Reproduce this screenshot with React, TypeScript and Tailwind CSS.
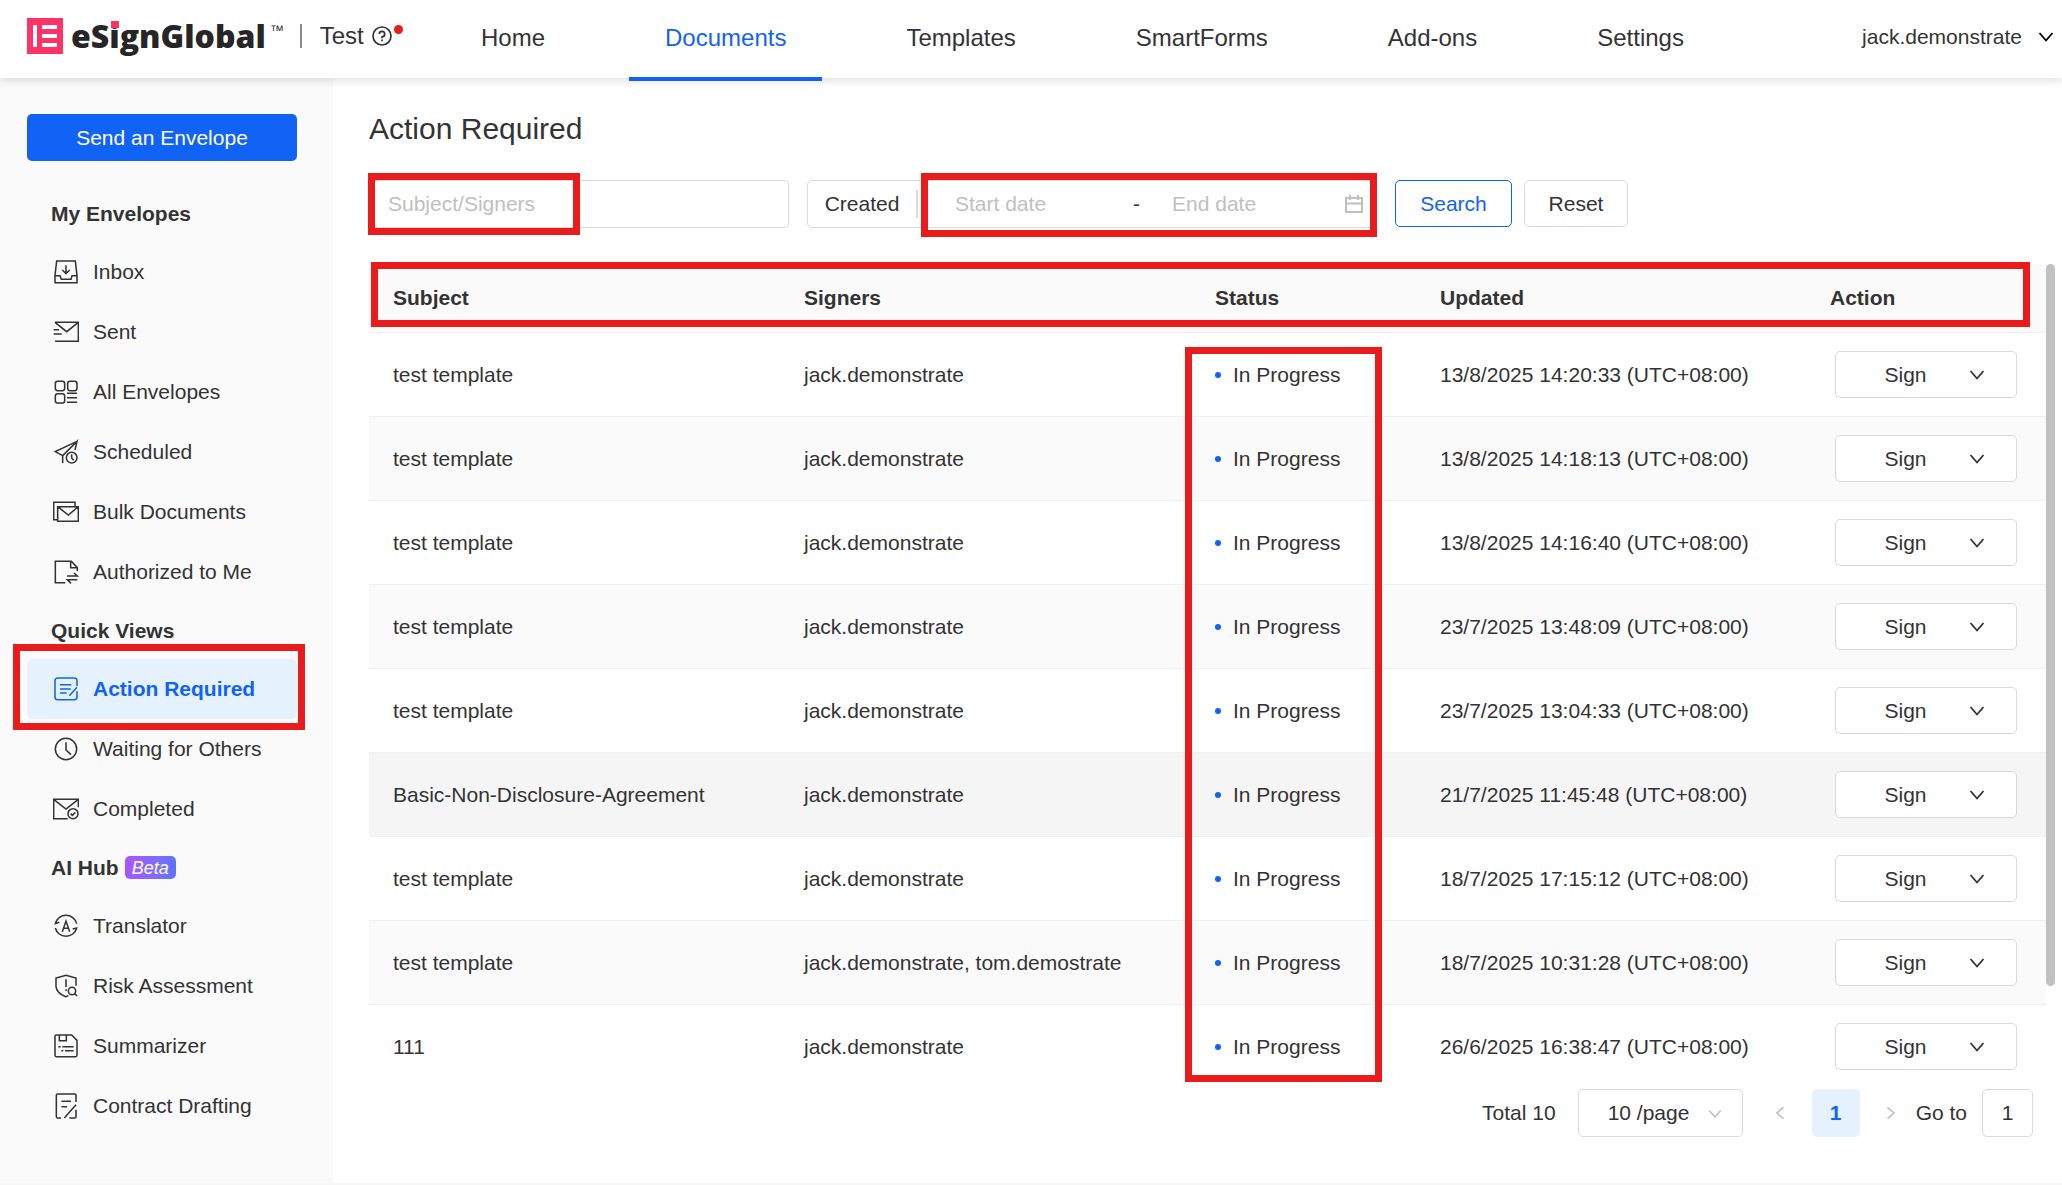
import type { ReactNode } from "react";

type NavItem = { label: string; icon: ReactNode; active?: boolean };
type Row = { subject: string; signers: string; updated: string; hovered?: boolean };

const tabs = ["Home", "Documents", "Templates", "SmartForms", "Add-ons", "Settings"];

const icons = {
  inbox: (
    <>
      <path d="M11 6H67L72 50V71H6V50Z" />
      <path d="M6 50H21L25 61H54L57 50H72M39 19V44M28 33L39 44L50 33" />
    </>
  ),
  sent: <path d="M6 10H76V67H6M6 10L41 38L76 10M2 32H18M2 45H26" />,
  all: (
    <>
      <rect x="7" y="7" width="28" height="28" rx="7" />
      <rect x="44" y="7" width="28" height="28" rx="7" />
      <rect x="7" y="44" width="28" height="28" rx="7" />
      <path d="M42 43H72M42 56H72M42 70H72" />
    </>
  ),
  scheduled: (
    <>
      <path d="M72 7L7 38L29 50V72M29 50L72 7L66 33" />
      <circle cx="56" cy="56" r="16" />
      <path d="M56 46V57L62 64" />
    </>
  ),
  bulk: <path d="M13 62H2V10H66V21M14 23H76V67H14ZM14 23L46 48L76 23" />,
  authorized: <path d="M37 71H7V7H55L73 26V36M53 7V26H73M63 42L73 51H42M73 62H43L54 73" />,
  action: (
    <path d="M72 30V14A8 8 0 0 0 64 6H14A8 8 0 0 0 6 14V63A8 8 0 0 0 14 71H64A8 8 0 0 0 72 63V46M21 26H55M21 39H53M21 51H41M72 34L49 59" />
  ),
  waiting: (
    <>
      <circle cx="39" cy="39" r="32" />
      <path d="M39 19V42L54 56" />
    </>
  ),
  completed: (
    <>
      <path d="M44 68H2V10H76V34M2 10L39 39L76 10" />
      <circle cx="60" cy="53" r="15" />
      <path d="M53 53L58 58L67 49" />
    </>
  ),
  translator: (
    <path d="M19 28L7 32A33 33 0 0 1 71 32M59 48L71 45A33 33 0 0 1 7 45M28 56L39 24L50 56M32 46H46" />
  ),
  risk: (
    <>
      <path d="M69 38V15L39 7L9 15V40C10 56 23 65 38 71L46 68M39 19V42M39 49V54" />
      <circle cx="57" cy="54" r="11" />
      <path d="M65 62L72 69" />
    </>
  ),
  summarizer: (
    <path d="M10 6H56L72 22V67A4 4 0 0 1 68 71H10A4 4 0 0 1 6 67V10A4 4 0 0 1 10 6ZM19 6V23H40V6M16 41H23M28 41H62M25 53H31M36 53H62" />
  ),
  contract: (
    <path d="M69 27V7A4 4 0 0 0 65 3H14A4 4 0 0 0 10 7V71A4 4 0 0 0 14 75H24M69 35L34 75M69 50V71A4 4 0 0 1 65 75H49M25 25H54M25 41H42" />
  ),
};

const sections: { title: string; beta?: boolean; items: NavItem[] }[] = [
  {
    title: "My Envelopes",
    items: [
      { label: "Inbox", icon: icons.inbox },
      { label: "Sent", icon: icons.sent },
      { label: "All Envelopes", icon: icons.all },
      { label: "Scheduled", icon: icons.scheduled },
      { label: "Bulk Documents", icon: icons.bulk },
      { label: "Authorized to Me", icon: icons.authorized },
    ],
  },
  {
    title: "Quick Views",
    items: [
      { label: "Action Required", icon: icons.action, active: true },
      { label: "Waiting for Others", icon: icons.waiting },
      { label: "Completed", icon: icons.completed },
    ],
  },
  {
    title: "AI Hub",
    beta: true,
    items: [
      { label: "Translator", icon: icons.translator },
      { label: "Risk Assessment", icon: icons.risk },
      { label: "Summarizer", icon: icons.summarizer },
      { label: "Contract Drafting", icon: icons.contract },
    ],
  },
];

const rows: Row[] = [
  { subject: "test template", signers: "jack.demonstrate", updated: "13/8/2025 14:20:33 (UTC+08:00)" },
  { subject: "test template", signers: "jack.demonstrate", updated: "13/8/2025 14:18:13 (UTC+08:00)" },
  { subject: "test template", signers: "jack.demonstrate", updated: "13/8/2025 14:16:40 (UTC+08:00)" },
  { subject: "test template", signers: "jack.demonstrate", updated: "23/7/2025 13:48:09 (UTC+08:00)" },
  { subject: "test template", signers: "jack.demonstrate", updated: "23/7/2025 13:04:33 (UTC+08:00)" },
  {
    subject: "Basic-Non-Disclosure-Agreement",
    signers: "jack.demonstrate",
    updated: "21/7/2025 11:45:48 (UTC+08:00)",
    hovered: true,
  },
  { subject: "test template", signers: "jack.demonstrate", updated: "18/7/2025 17:15:12 (UTC+08:00)" },
  {
    subject: "test template",
    signers: "jack.demonstrate, tom.demostrate",
    updated: "18/7/2025 10:31:28 (UTC+08:00)",
  },
  { subject: "111", signers: "jack.demonstrate", updated: "26/6/2025 16:38:47 (UTC+08:00)" },
];

function Chevron({ className }: { className: string }) {
  return (
    <svg viewBox="0 0 16 16" fill="none" stroke="currentColor" strokeWidth="1.8" className={className} aria-hidden="true">
      <path d="M1.5 4L8 11.5L14.500 4" />
    </svg>
  );
}

/** Red frame that calls attention to the area of its positioned parent. */
function Highlight({ className }: { className: string }) {
  return (
    <span
      aria-hidden="true"
      className={`pointer-events-none absolute z-10 border-[7px] border-[#e81c1c] ${className}`}
    />
  );
}

function Header() {
  return (
    <header className="relative z-10 flex h-[78px] items-start bg-white shadow-[0_3px_8px_rgba(0,0,0,0.12)]">
      <div className="flex h-[72px] w-[445px] shrink-0 items-center pl-[27px]">
        <svg viewBox="0 0 36 36" className="size-9" aria-hidden="true">
          <path fill="#ff3366" d="M0 0H36V36H0Z" />
          <path fill="#fff" d="M6 7H10V29H6ZM15 7H30V11H15ZM15 16H30V20H15ZM15 25H30V29H15Z" />
        </svg>
        <span className="ml-2 font-['Open_Sans','Noto_Sans',sans-serif] text-[32px] leading-8 font-extrabold text-[#262626]">
          eS
          <span className="relative">
            i
            <span className="absolute top-[7px] left-[2px] h-[7px] w-2 bg-[#ff3366]" />
          </span>
          gnGlobal
        </span>
        <span className="ml-1 self-start pt-[22px] text-[14px] leading-4">™</span>
        <span className="ml-4 h-6 w-[2px] bg-[#8c8c8c]" />
        <span className="ml-[18px] text-[24px]">Test</span>
        <button type="button" aria-label="Help" className="relative ml-2">
          <svg viewBox="0 0 20 20" fill="none" stroke="currentColor" strokeWidth="1.7" className="size-5">
            <circle cx="10" cy="10" r="9" />
            <path d="M7.3 8A2.7 2.7 0 1 1 10 10.8V12.3M10 13.6V15.3" />
          </svg>
          <span className="absolute -top-[1px] -right-[11px] size-[9px] rounded-full bg-[#e81c1c]" />
        </button>
      </div>
      <nav className="flex gap-12">
        {tabs.map((tab) => (
          <a
            key={tab}
            href="#"
            className={`flex h-[81px] items-center border-b-4 px-9 pb-[2px] text-[24px] ${
              tab === "Documents" ? "border-[#1063f5] text-[#1063f5]" : "border-transparent"
            }`}
          >
            {tab}
          </a>
        ))}
      </nav>
      <button type="button" className="mr-2 ml-auto flex h-[73px] items-center gap-4">
        jack.demonstrate
        <Chevron className="size-4 text-black" />
      </button>
    </header>
  );
}

function Sidebar() {
  return (
    <aside className="flex w-[333px] shrink-0 flex-col bg-[#fafafa] pt-9 pr-9 pl-[27px]">
      <button type="button" className="mb-6 h-[47px] rounded-[5px] bg-[#1063f5] text-white">
        Send an Envelope
      </button>
      {sections.map((section) => (
        <section key={section.title}>
          <h2 className="flex h-[57px] items-center gap-[6px] pl-6 font-bold">
            {section.title}
            {section.beta && (
              <span className="flex h-[23px] w-[51px] items-center justify-center rounded-[5px] bg-gradient-to-r from-[#a855ff] to-[#5b75ff] text-[18px] font-normal text-white italic">
                Beta
              </span>
            )}
          </h2>
          <ul>
            {section.items.map((item) => (
              <li key={item.label} className="relative">
                <a
                  href="#"
                  className={`flex h-[60px] items-center gap-[14px] rounded-[6px] pl-[26px] ${
                    item.active ? "bg-[#e6f1fe] font-bold text-[#1063f5]" : ""
                  }`}
                >
                  <svg
                    viewBox="0 0 78 78"
                    fill="none"
                    stroke="currentColor"
                    strokeWidth="4.6"
                    className="size-[26px]"
                    aria-hidden="true"
                  >
                    {item.icon}
                  </svg>
                  {item.label}
                </a>
                {item.active && <Highlight className="-top-[15px] -right-2 -bottom-[11px] -left-[14px]" />}
              </li>
            ))}
          </ul>
        </section>
      ))}
    </aside>
  );
}

function Filters() {
  return (
    <form className="mt-[30px] flex" onSubmit={(e) => e.preventDefault()}>
      <div className="relative w-[420px]">
        <input
          type="text"
          aria-label="Subject or signers"
          placeholder="Subject/Signers"
          className="h-12 w-full rounded-[5px] border border-[#d9d9d9] px-[18px] placeholder:text-[#bfbfbf]"
        />
        <Highlight className="-top-[7px] -left-[1px] h-[62px] w-[212px]" />
      </div>
      <div className="ml-[18px] flex h-12 w-[570px] items-center rounded-[5px] border border-[#d9d9d9]">
        <button type="button" className="w-[108px] text-center">
          Created
        </button>
        <div className="relative flex h-full flex-1 items-center">
          <span className="h-7 w-[2px] bg-[#d9d9d9]" />
          <input
            type="text"
            aria-label="Start date"
            placeholder="Start date"
            className="ml-[37px] w-[178px] placeholder:text-[#bfbfbf]"
          />
          <span className="w-[39px]">-</span>
          <input
            type="text"
            aria-label="End date"
            placeholder="End date"
            className="w-0 flex-1 placeholder:text-[#bfbfbf]"
          />
          <svg
            viewBox="0 0 18 18"
            fill="none"
            stroke="currentColor"
            strokeWidth="2"
            className="mr-[13px] size-[18px] text-[#bfbfbf]"
            aria-hidden="true"
          >
            <path d="M1 3H17V17H1ZM1 8.500H17M5 0V5M13 0V5" />
          </svg>
          <Highlight className="-top-2 -right-[1px] -bottom-[10px] left-[5px]" />
        </div>
      </div>
      <button
        type="submit"
        className="ml-[18px] h-[47px] w-[117px] rounded-[5px] border border-[#1063f5] text-[#1063f5]"
      >
        Search
      </button>
      <button type="reset" className="ml-3 h-[47px] w-[104px] rounded-[5px] border border-[#d9d9d9]">
        Reset
      </button>
    </form>
  );
}

function EnvelopeTable() {
  return (
    <div className="mt-9 flex">
      <div className="relative flex-1">
        <table className="w-full table-fixed border-separate border-spacing-0 text-left">
          <colgroup>
            <col />
            <col />
            <col className="w-[225px]" />
            <col className="w-[390px]" />
            <col className="w-[240px]" />
          </colgroup>
          <thead>
            <tr className="h-[69px] bg-[#fafafa]">
              <th className="border-b border-[#f0f0f0] px-6">Subject</th>
              <th className="border-b border-[#f0f0f0] px-6">Signers</th>
              <th className="relative border-b border-[#f0f0f0] px-6">
                Status
                <Highlight className="top-[83px] -left-[6px] h-[735px] w-[197px]" />
              </th>
              <th className="border-b border-[#f0f0f0] px-6">Updated</th>
              <th className="border-b border-[#f0f0f0] px-6">Action</th>
            </tr>
          </thead>
          <tbody>
            {rows.map((row, i) => (
              <tr
                key={row.updated}
                className={`h-[84px] *:border-b *:border-[#f0f0f0] last:*:border-transparent ${
                  row.hovered ? "bg-[#f5f5f5]" : i % 2 ? "bg-[#fafafa]" : ""
                }`}
              >
                <td className="px-6">{row.subject}</td>
                <td className="px-6">{row.signers}</td>
                <td className="px-6">
                  <span className="flex items-center gap-3">
                    <span className="size-[6px] rounded-full bg-[#1063f5]" />
                    In Progress
                  </span>
                </td>
                <td className="px-6">{row.updated}</td>
                <td className="px-[29px]">
                  <div className="flex h-[47px] rounded-[5px] border border-[#d9d9d9] bg-white">
                    <button type="button" className="flex-1 pl-6 text-center">
                      Sign
                    </button>
                    <button type="button" aria-label="More actions" className="flex w-[65px] items-center pl-[18px]">
                      <Chevron className="size-4" />
                    </button>
                  </div>
                </td>
              </tr>
            ))}
          </tbody>
        </table>
        <Highlight className="-top-[2px] right-4 left-[2px] h-[65px]" />
      </div>
      <div className="h-[722px] w-[9px] rounded-full bg-[#c1c1c1]" />
    </div>
  );
}

function Pagination() {
  return (
    <div className="flex h-12 items-center justify-end pr-[22px]">
      <span>Total 10</span>
      <div className="relative ml-[22px]">
        <select
          aria-label="Rows per page"
          className="h-12 w-[165px] appearance-none rounded-[5px] border border-[#d9d9d9] bg-white pl-[29px]"
        >
          <option>10 /page</option>
        </select>
        <Chevron className="pointer-events-none absolute top-[18px] right-[21px] size-[14px] text-[#bfbfbf]" />
      </div>
      <button type="button" aria-label="Previous page" className="flex w-[69px] justify-center pl-[5px]">
        <Chevron className="size-[14px] rotate-90 text-[#bfbfbf]" />
      </button>
      <button type="button" aria-current="page" className="size-12 rounded-[5px] bg-[#e6f1fe] font-bold text-[#1063f5]">
        1
      </button>
      <button type="button" aria-label="Next page" className="flex w-14 justify-center pl-[7px]">
        <Chevron className="size-[14px] -rotate-90 text-[#bfbfbf]" />
      </button>
      <label className="flex items-center gap-[15px]">
        Go to
        <input
          type="text"
          defaultValue="1"
          className="h-12 w-[51px] rounded-[5px] border border-[#d9d9d9] text-center"
        />
      </label>
    </div>
  );
}

export default function App() {
  return (
    <div className="flex min-h-screen flex-col bg-white font-['Liberation_Sans',Arial,sans-serif] text-[21px] leading-[30px] text-[#333]">
      <Header />
      <div className="flex flex-1">
        <Sidebar />
        <main className="min-w-0 flex-1 pt-[30px] pr-[7px] pl-9">
          <h1 className="text-[30px] leading-[42px]">Action Required</h1>
          <Filters />
          <EnvelopeTable />
          <Pagination />
        </main>
      </div>
      <div className="h-[2px] bg-[#f7f7f7]" />
    </div>
  );
}
